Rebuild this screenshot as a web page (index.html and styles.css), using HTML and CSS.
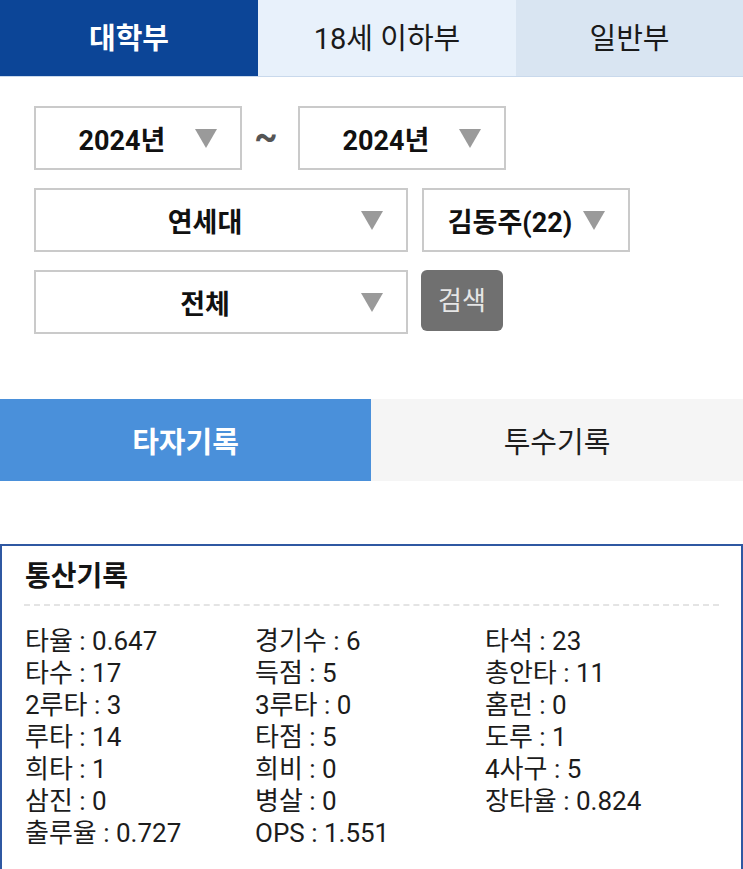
FILE: index.html
```html
<!DOCTYPE html>
<html lang="ko">
<head>
<meta charset="utf-8">
<title>기록실</title>
<link rel="stylesheet" href="styles.css">
</head>
<body>
  <nav class="league-tabs">
    <a class="league-tab active">대학부</a>
    <a class="league-tab mid">18세 이하부</a>
    <a class="league-tab last">일반부</a>
  </nav>

  <section class="filters">
    <div class="filter-row">
      <div class="select w-small">2024년<span class="caret"></span></div>
      <span class="tilde">~</span>
      <div class="select w-small">2024년<span class="caret"></span></div>
    </div>
    <div class="filter-row">
      <div class="select w-wide">연세대<span class="caret"></span></div>
      <div class="select w-small">김동주(22)<span class="caret"></span></div>
    </div>
    <div class="filter-row">
      <div class="select w-wide">전체<span class="caret"></span></div>
      <button class="search-btn">검색</button>
    </div>
  </section>

  <nav class="record-tabs">
    <a class="record-tab active">타자기록</a>
    <a class="record-tab">투수기록</a>
  </nav>

  <section class="stats-card">
    <h2 class="stats-title">통산기록</h2>
    <ul class="stats-grid">
      <li>타율 : 0.647</li>
      <li>경기수 : 6</li>
      <li>타석 : 23</li>
      <li>타수 : 17</li>
      <li>득점 : 5</li>
      <li>총안타 : 11</li>
      <li>2루타 : 3</li>
      <li>3루타 : 0</li>
      <li>홈런 : 0</li>
      <li>루타 : 14</li>
      <li>타점 : 5</li>
      <li>도루 : 1</li>
      <li>희타 : 1</li>
      <li>희비 : 0</li>
      <li>4사구 : 5</li>
      <li>삼진 : 0</li>
      <li>병살 : 0</li>
      <li>장타율 : 0.824</li>
      <li>출루율 : 0.727</li>
      <li>OPS : 1.551</li>
    </ul>
  </section>
</body>
</html>
```

FILE: styles.css
```css
html, body {
  margin: 0;
  padding: 0;
  background: #ffffff;
}

body {
  font-family: Roboto, "Noto Sans CJK KR", sans-serif;
  color: #1e1e1e;
  overflow: hidden;
}

/* League tabs across the top */
.league-tabs {
  display: grid;
  grid-template-columns: 258px 258px 1fr;
  height: 76px;
  border-bottom: 1px solid #c9d9ec;
}

.league-tab {
  display: flex;
  align-items: center;
  justify-content: center;
  padding-bottom: 4px;
  font-size: 29px;
  color: #1a1a1a;
  background: #e8f1fb;
}

.league-tab.active {
  background: #0c4597;
  color: #ffffff;
  font-weight: 700;
}

.league-tab.last {
  background: #d9e5f2;
}

/* Filter selects */
.filters {
  display: flex;
  flex-direction: column;
  gap: 18px;
  padding: 29px 0 0 34px;
}

.filter-row {
  display: flex;
  align-items: flex-start;
  gap: 14px;
}

.select {
  position: relative;
  box-sizing: border-box;
  height: 64px;
  border: 2px solid #cacaca;
  padding-right: 32px;
  display: flex;
  align-items: center;
  justify-content: center;
  font-size: 27px;
  font-weight: 700;
  color: #111;
}

.w-small { width: 208px; }
.w-wide { width: 374px; }

.caret {
  position: absolute;
  right: 23px;
  top: 50%;
  margin-top: -9px;
  width: 0;
  height: 0;
  border-left: 11px solid transparent;
  border-right: 11px solid transparent;
  border-top: 19px solid #9a9a9a;
}

.tilde {
  width: 28px;
  margin: 0 0 0 -4px;
  padding-right: 4px;
  line-height: 62px;
  text-align: center;
  font-size: 36px;
  font-weight: 700;
  color: #555;
}

.search-btn {
  box-sizing: border-box;
  width: 82px;
  height: 61px;
  margin-left: -1px;
  border: 0;
  border-radius: 6px;
  background: #707070;
  color: #e6e6e6;
  font-family: "Noto Sans CJK KR", Roboto, sans-serif;
  font-size: 26px;
  padding: 0 0 4px;
}

/* Batter / pitcher record tabs */
.record-tabs {
  display: grid;
  grid-template-columns: 371px 1fr;
  height: 82px;
  margin-top: 65px;
}

.record-tab {
  display: flex;
  align-items: center;
  justify-content: center;
  font-size: 29px;
  background: #f5f5f5;
  color: #1e1e1e;
}

.record-tab.active {
  background: #4a90da;
  color: #ffffff;
  font-weight: 700;
}

/* Career totals card */
.stats-card {
  margin-top: 63px;
  box-sizing: border-box;
  width: 743px;
  height: 340px;
  border: 2px solid #2f58a2;
  padding: 14px 22px 0 22px;
}

.stats-title {
  margin: 0;
  padding: 0 0 10px 1px;
  font-size: 28px;
  line-height: 34px;
  font-weight: 700;
  color: #151515;
  border-bottom: 2px dashed #e4e4e4;
}

.stats-grid {
  list-style: none;
  margin: 19px 0 0;
  padding: 0 0 0 1px;
  display: grid;
  grid-template-columns: 230px 230px 1fr;
  font-size: 26px;
  line-height: 32px;
  color: #1c1c1c;
}
```
